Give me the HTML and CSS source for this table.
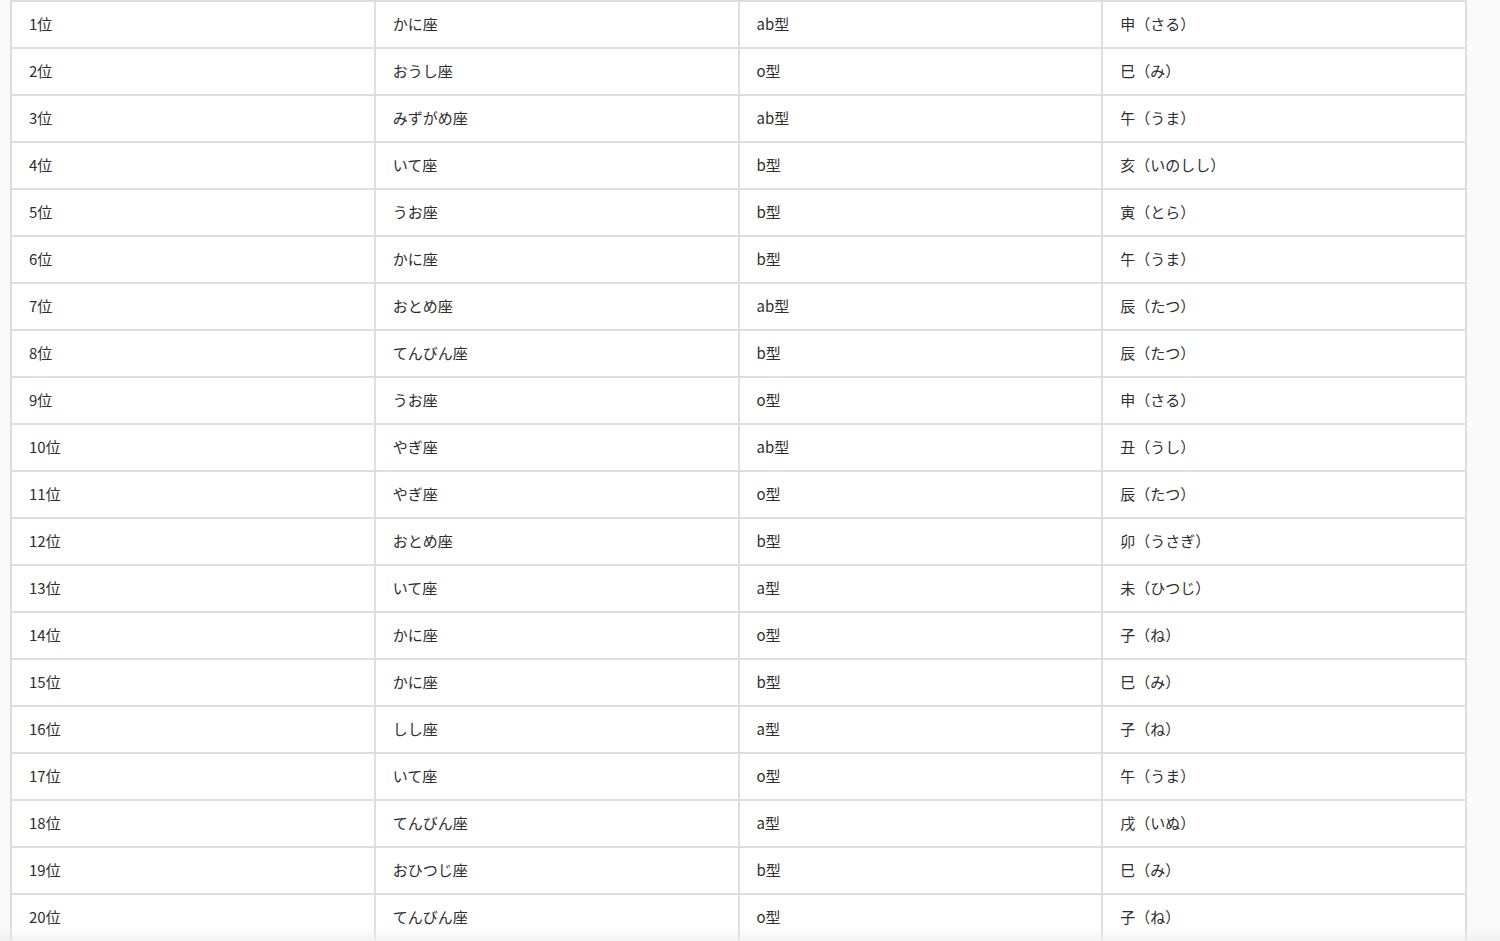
FILE: index.html
```html
<!DOCTYPE html>
<html lang="ja">
<head>
<meta charset="utf-8">
<title>ランキング</title>
<link rel="stylesheet" href="styles.css">
</head>
<body>
<div class="wrap">
<table class="rank">
<tbody>
<tr><td>1位</td><td>かに座</td><td>ab型</td><td>申（さる）</td></tr>
<tr><td>2位</td><td>おうし座</td><td>o型</td><td>巳（み）</td></tr>
<tr><td>3位</td><td>みずがめ座</td><td>ab型</td><td>午（うま）</td></tr>
<tr><td>4位</td><td>いて座</td><td>b型</td><td>亥（いのしし）</td></tr>
<tr><td>5位</td><td>うお座</td><td>b型</td><td>寅（とら）</td></tr>
<tr><td>6位</td><td>かに座</td><td>b型</td><td>午（うま）</td></tr>
<tr><td>7位</td><td>おとめ座</td><td>ab型</td><td>辰（たつ）</td></tr>
<tr><td>8位</td><td>てんびん座</td><td>b型</td><td>辰（たつ）</td></tr>
<tr><td>9位</td><td>うお座</td><td>o型</td><td>申（さる）</td></tr>
<tr><td>10位</td><td>やぎ座</td><td>ab型</td><td>丑（うし）</td></tr>
<tr><td>11位</td><td>やぎ座</td><td>o型</td><td>辰（たつ）</td></tr>
<tr><td>12位</td><td>おとめ座</td><td>b型</td><td>卯（うさぎ）</td></tr>
<tr><td>13位</td><td>いて座</td><td>a型</td><td>未（ひつじ）</td></tr>
<tr><td>14位</td><td>かに座</td><td>o型</td><td>子（ね）</td></tr>
<tr><td>15位</td><td>かに座</td><td>b型</td><td>巳（み）</td></tr>
<tr><td>16位</td><td>しし座</td><td>a型</td><td>子（ね）</td></tr>
<tr><td>17位</td><td>いて座</td><td>o型</td><td>午（うま）</td></tr>
<tr><td>18位</td><td>てんびん座</td><td>a型</td><td>戌（いぬ）</td></tr>
<tr><td>19位</td><td>おひつじ座</td><td>b型</td><td>巳（み）</td></tr>
<tr><td>20位</td><td>てんびん座</td><td>o型</td><td>子（ね）</td></tr>
</tbody>
</table>
</div>
<div class="fade"></div>
</body>
</html>
```

FILE: styles.css
```css
html, body {
  margin: 0;
  padding: 0;
  background: #fafafa;
  height: 941px;
  overflow: hidden;
}
body {
  font-family: "Noto Sans CJK JP", "Noto Sans", sans-serif;
  color: #2e2e2e;
  font-size: 15px;
}
.wrap {
  padding-left: 10px;
  width: 1457px;
  height: 940px;
  overflow: hidden;
}
.rank {
  width: 100%;
  border-collapse: collapse;
  table-layout: fixed;
  background: #fff;
}
.rank td {
  border: 2px solid #dedede;
  height: 47px;
  padding: 0 17px 2px;
  line-height: 20px;
  vertical-align: middle;
  box-sizing: border-box;
}
.fade {
  position: fixed;
  left: 0;
  right: 0;
  bottom: 0;
  height: 14px;
  background: linear-gradient(to bottom, rgba(240,240,240,0), rgba(236,236,236,0.6));
  pointer-events: none;
}
```
